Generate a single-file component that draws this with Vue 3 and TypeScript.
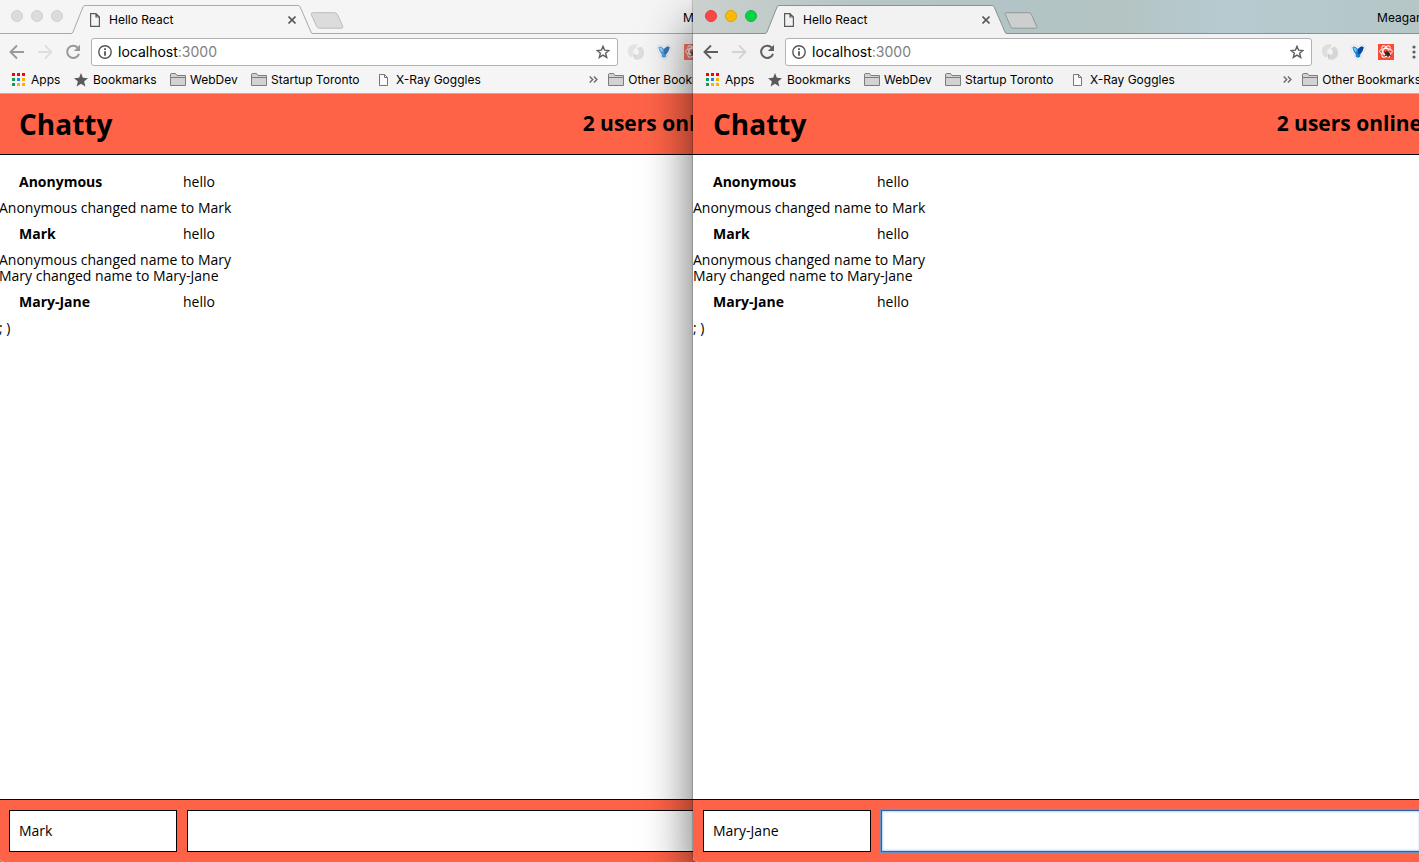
<script setup lang="ts">
import { ref } from 'vue'

interface Message {
  id: number
  user?: string
  text: string
}

interface Bookmark {
  label: string
  icon: 'apps' | 'star' | 'folder' | 'document'
}

interface BrowserWindow {
  id: string
  active: boolean
  user: string
  draft: string
}

const windows = ref<BrowserWindow[]>([
  { id: 'left', active: false, user: 'Mark', draft: '' },
  { id: 'right', active: true, user: 'Mary-Jane', draft: '' },
])

const messages: Message[] = [
  { id: 1, user: 'Anonymous', text: 'hello' },
  { id: 2, text: 'Anonymous changed name to Mark' },
  { id: 3, user: 'Mark', text: 'hello' },
  { id: 4, text: 'Anonymous changed name to Mary' },
  { id: 5, text: 'Mary changed name to Mary-Jane' },
  { id: 6, user: 'Mary-Jane', text: 'hello' },
  { id: 7, text: '; )' },
]

const bookmarks: Bookmark[] = [
  { label: 'Apps', icon: 'apps' },
  { label: 'Bookmarks', icon: 'star' },
  { label: 'WebDev', icon: 'folder' },
  { label: 'Startup Toronto', icon: 'folder' },
  { label: 'X-Ray Goggles', icon: 'document' },
]

const appColors = ['#f00', '#f00', '#f00', '#0f9d58', '#1a84f5', '#fbb003', '#0f9d58', '#fbb003', '#fbb003']
</script>

<template>
  <div class="desktop">
    <section
      v-for="win in windows"
      :key="win.id"
      class="window"
      :class="[win.id, { active: win.active }]"
    >
      <div class="tabstrip">
        <div class="lights">
          <button class="light close" aria-label="Close window"></button>
          <button class="light minimize" aria-label="Minimize window"></button>
          <button class="light maximize" aria-label="Zoom window"></button>
        </div>
        <div class="tab">
          <svg class="tab-shape" viewBox="0 0 242 29" width="242" height="29">
            <path class="tab-fill" d="M0 29 L0 28.5 L2 27 L12 2 Q12.700 .5 14 .5 H227 Q228.500 .5 229.200 2 L240 27 Q240.600 28.500 242 28.500 V29 Z" />
            <path class="tab-line" d="M0 28.500 Q1.400 28.500 2 27 L12 2 Q12.700 .5 14 .5 H227 Q228.500 .5 229.200 2 L240 27 Q240.600 28.500 242 28.500" />
          </svg>
          <svg class="tab-icon" viewBox="0 0 10 14" width="10" height="14">
            <path d="M.6 .6 H6 L9.400 4 V13.400 H.6 Z M6 .6 V4 H9.400" fill="none" stroke="#5a5a5a" stroke-width="1.200" />
          </svg>
          <span class="tab-title">Hello React</span>
          <button class="tab-close" aria-label="Close tab">
            <svg viewBox="0 0 8 8" width="8" height="8"><path d="M.5 .5 L7.500 7.500 M7.500 .5 L.5 7.500" stroke="#5a5a5a" stroke-width="1.6" /></svg>
          </button>
        </div>
        <button class="new-tab" aria-label="New tab">
          <svg viewBox="0 0 34 17" width="34" height="17">
            <path class="new-tab-shape" d="M3 .7 H24.500 Q26.500 .7 27.300 2.300 L32.700 14.200 Q33.400 16.200 31.500 16.200 H9.500 Q7.500 16.200 6.700 14.500 L1.300 2.500 Q.6 .7 3 .7 Z" />
          </svg>
        </button>
        <button class="profile">Meagan</button>
      </div>

      <div class="toolbar">
        <button class="nav-btn" aria-label="Back">
          <svg viewBox="0 0 16 16" width="16" height="16"><path d="M15 8 H2.500 M8 1.500 L1.500 8 L8 14.500" fill="none" stroke="currentColor" stroke-width="1.900" /></svg>
        </button>
        <button class="nav-btn forward" aria-label="Forward">
          <svg viewBox="0 0 16 16" width="16" height="16"><path d="M1 8 H13.500 M8 1.500 L14.500 8 L8 14.500" fill="none" stroke="currentColor" stroke-width="1.900" /></svg>
        </button>
        <button class="nav-btn" aria-label="Reload">
          <svg viewBox="0 0 16 16" width="16" height="16">
            <path d="M12.700 3.600 A6.100 6.100 0 1 0 14 9.800" fill="none" stroke="currentColor" stroke-width="2" />
            <path d="M15 .8 V7 H8.800 Z" fill="currentColor" />
          </svg>
        </button>
        <div class="omnibox">
          <svg viewBox="0 0 14 14" width="14" height="14">
            <circle cx="7" cy="7" r="6.200" fill="none" stroke="#555" stroke-width="1.400" />
            <path d="M6.100 3.300 H7.900 V5 H6.100 Z M6.100 6.200 H7.900 V10.700 H6.100 Z" fill="#555" />
          </svg>
          <span class="url">localhost<span class="port">:3000</span></span>
          <button class="bookmark-star" aria-label="Bookmark this page">
            <svg viewBox="0 0 14 14" width="14" height="14"><path d="M7 1.300 L8.600 5.200 L12.900 5.500 L9.600 8.200 L10.700 12.400 L7 10.100 L3.300 12.400 L4.400 8.200 L1.100 5.500 L5.400 5.200 Z" fill="none" stroke="#5f5f5f" stroke-width="1.400" /></svg>
          </button>
        </div>
        <div class="extensions">
          <button aria-label="Redirect extension">
            <svg viewBox="0 0 16 16" width="16" height="16">
              <path d="M10 1 A7 7 0 0 0 3.500 13.500 L7.500 11.300 A3.600 3.600 0 0 1 7.500 4.500 Z" fill="#dedede" />
              <path d="M6 15 A7 7 0 0 0 12.500 2.500 L8.500 4.700 A3.600 3.600 0 0 1 8.500 11.500 Z" fill="#d6d6d6" />
              <path d="M6 15 L8.500 11.500 L6.500 9.500 Z" fill="#c2c2c2" />
            </svg>
          </button>
          <button aria-label="Vysor extension">
            <svg viewBox="0 0 16 16" width="16" height="16">
              <path d="M.8 4 Q1.500 1 4.500 1 Q6.500 1.200 8 3 Q9.500 1.200 11.500 1 Q14.500 1 15.200 4 Q14.500 8 11.500 11 V13.500 Q8 17.500 4.500 13.500 V11 Q1.500 8 .8 4 Z" fill="#fff" stroke="#d8d8d8" stroke-width=".8" />
              <path d="M2.300 3.600 Q3.800 2 5.800 3 L8 5 L10.200 3 Q12.200 2 13.700 3.600 Q13 7.500 10.300 10.500 V12.700 Q8 14.700 5.700 12.700 V10.500 Q3 7.500 2.300 3.600 Z" fill="#1583d6" />
              <path d="M10.200 3 Q12.200 2 13.700 3.600 Q13 7.500 10.300 10 L8 10.500 V5 Z" fill="#07489b" />
              <path d="M3.200 4 Q4.500 3 5.800 4 L7 6.500 L5.500 8 Z" fill="#7cc5f3" />
            </svg>
          </button>
          <button aria-label="React extension">
            <svg viewBox="0 0 16 16" width="16" height="16">
              <rect width="16" height="16" fill="#fa4b35" />
              <g fill="none" stroke="#fff" stroke-width="1">
                <ellipse cx="8" cy="7.500" rx="6.400" ry="3" />
                <ellipse cx="8" cy="7.500" rx="6.400" ry="3" transform="rotate(60 8 7.500)" />
                <ellipse cx="8" cy="7.500" rx="6.400" ry="3" transform="rotate(120 8 7.500)" />
              </g>
              <ellipse cx="9.500" cy="9.800" rx="2.800" ry="2.200" fill="#43221d" transform="rotate(35 9.500 9.800)" />
              <path d="M6 7.500 L8.500 9.500 M11.500 6.500 L10.500 9 M6.500 12 L9 10.500 M10 13.500 L10 11 M13 12.500 L11 10" stroke="#43221d" />
            </svg>
          </button>
        </div>
        <button class="menu" aria-label="Menu">
          <svg viewBox="0 0 4 14" width="4" height="14"><g fill="#5f5f5f"><circle cx="2" cy="2" r="1.600" /><circle cx="2" cy="7" r="1.600" /><circle cx="2" cy="12" r="1.600" /></g></svg>
        </button>
      </div>

      <nav class="bookmarks">
        <a v-for="item in bookmarks" :key="item.label" href="#" class="bookmark" :class="item.icon">
          <svg v-if="item.icon === 'apps'" viewBox="0 0 13 13" width="13" height="13">
            <rect
              v-for="(color, i) in appColors"
              :key="i"
              :x="(i % 3) * 5"
              :y="Math.floor(i / 3) * 5"
              width="3"
              height="3"
              :fill="color"
            />
          </svg>
          <svg v-else-if="item.icon === 'star'" viewBox="0 0 14 14" width="14" height="14"><path d="M7 0 L8.900 4.800 L14 5.200 L10.100 8.500 L11.400 13.600 L7 10.800 L2.600 13.600 L3.900 8.500 L0 5.200 L5.100 4.800 Z" fill="#5a5a5a" /></svg>
          <svg v-else-if="item.icon === 'folder'" viewBox="0 0 16 13" width="16" height="13"><path d="M.5 12.500 V2 Q.5 .5 1.500 .5 H5.500 L7 2.500 H15.500 V12.500 Z" fill="#d2d2d2" stroke="#7d7d7d" /><path d="M1 4.500 H15" stroke="#7d7d7d" /></svg>
          <svg v-else viewBox="0 0 9 12" width="9" height="12"><path d="M.5 .5 H5.500 L8.500 3.500 V11.500 H.5 Z M5.500 .5 V3.500 H8.500" fill="#fafafa" stroke="#777" /></svg>
          <span>{{ item.label }}</span>
        </a>
        <button class="overflow" aria-label="More bookmarks">
          <svg viewBox="0 0 9 7" width="9" height="7"><path d="M.7 .5 L3.700 3.500 L.7 6.500 M4.900 .5 L7.900 3.500 L4.900 6.500" fill="none" stroke="#6a6a6a" stroke-width="1.400" /></svg>
        </button>
        <a href="#" class="bookmark">
          <svg viewBox="0 0 16 13" width="16" height="13"><path d="M.5 12.500 V2 Q.5 .5 1.500 .5 H5.500 L7 2.500 H15.500 V12.500 Z" fill="#d2d2d2" stroke="#7d7d7d" /><path d="M1 4.500 H15" stroke="#7d7d7d" /></svg>
          <span>Other Bookmarks</span>
        </a>
      </nav>

      <div class="page">
        <header class="chat-header">
          <h1>Chatty</h1>
          <h2>2 users online</h2>
        </header>
        <main class="messages">
          <template v-for="msg in messages" :key="msg.id">
            <div v-if="msg.user" class="message">
              <span class="message-user">{{ msg.user }}</span>
              <span>{{ msg.text }}</span>
            </div>
            <div v-else class="notice">{{ msg.text }}</div>
          </template>
        </main>
        <footer class="chatbar">
          <input v-model="win.user" class="chatbar-user" type="text" aria-label="Your name" />
          <input
            v-model="win.draft"
            class="chatbar-message"
            :class="{ focused: win.active }"
            type="text"
            aria-label="Message"
          />
        </footer>
      </div>
    </section>
  </div>
</template>

<style>
body {
  margin: 0;
}
</style>

<style scoped>
.desktop {
  position: relative;
  height: 100vh;
  overflow: hidden;
  background: #6f7f82;
}

.window {
  position: absolute;
  top: 0;
  bottom: 0;
  width: round(52%, 1px);
  display: flex;
  flex-direction: column;
  border-radius: 0 0 5px 5px;
  overflow: hidden;
  background: #f5f5f5;
  color: #000;
  font-family: Inter, "Liberation Sans", sans-serif;
  font-size: 12px;
}

.window.left {
  left: -1px;
}

.window.right {
  left: 693px;
  background: #f2f2f2;
  box-shadow: 0 0 1px 1px rgba(0, 0, 0, 0.2), 0 24px 50px rgba(0, 0, 0, 0.6);
}

button {
  display: flex;
  align-items: center;
  justify-content: center;
  margin: 0;
  padding: 0;
  border: 0;
  background: none;
  color: inherit;
  font: inherit;
}

svg {
  display: block;
  flex: none;
}

.tabstrip {
  display: flex;
  flex: none;
  box-sizing: border-box;
  height: 34px;
  border-bottom: 1px solid #a9a9a9;
}

.active .tabstrip {
  border-color: #8b9192;
  background: linear-gradient(90deg, #cbd1ce 0, #b7c5c6 22%, #b3c4c6 45%, #b4c4c3 58%, #b6cbd0 72%, #b5c6c5 100%);
}

.lights {
  display: flex;
  gap: 8px;
  width: 60px;
  padding: 10px 0 0 12px;
}

.light {
  box-sizing: border-box;
  width: 12px;
  height: 12px;
  border: 1px solid #d0d0d0;
  border-radius: 50%;
  background: #dcdcdc;
}

.active .close {
  border-color: #e33e3a;
  background: #fc4548;
}

.active .minimize {
  border-color: #e0a000;
  background: #fdbb05;
}

.active .maximize {
  border-color: #12b23a;
  background: #08d346;
}

.tab {
  position: relative;
  display: flex;
  flex: none;
  align-items: center;
  box-sizing: border-box;
  width: 242px;
  height: 29px;
  margin-top: 5px;
  padding: 0 17px 0 19px;
}

.tab-shape {
  position: absolute;
  inset: 0;
}

.tab-fill {
  fill: #f5f5f5;
}

.tab-line {
  fill: none;
  stroke: #a9a9a9;
}

.active .tab-fill {
  fill: #f2f2f2;
}

.active .tab-line {
  stroke: #8b9192;
}

.tab-icon,
.tab-title,
.tab-close {
  position: relative;
}

.tab-title {
  flex: 1;
  margin-left: 9px;
}

.tab-close {
  width: 8px;
  height: 8px;
}

.new-tab {
  width: 34px;
  height: 17px;
  margin: 12px 0 0 -3px;
}

.new-tab-shape {
  fill: #dcdcdc;
  stroke: #bcbcbc;
}

.active .new-tab-shape {
  fill: #cdcfcf;
  stroke: #909797;
}

.profile {
  height: 34px;
  margin-left: auto;
  margin-right: 8px;
}

.toolbar {
  display: flex;
  flex: none;
  align-items: center;
  height: 36px;
  padding: 0 15px 0 10px;
}

.nav-btn {
  width: 16px;
  height: 16px;
  margin-right: 12px;
  color: #5f5f5f;
}

.left .nav-btn {
  color: #999;
}

.nav-btn.forward {
  color: #d4d4d4;
}

.left .nav-btn.forward {
  color: #dfdfdf;
}

.omnibox {
  display: flex;
  flex: 1;
  align-items: center;
  box-sizing: border-box;
  height: 28px;
  margin-left: -2px;
  padding: 0 7px 0 6px;
  border: 1px solid #b2b2b2;
  border-radius: 3px;
  background: #fff;
  font-size: 14px;
}

.url {
  flex: 1;
  margin-left: 6px;
  padding-bottom: 1px;
}

.port {
  color: #808080;
}

.extensions {
  display: flex;
  gap: 12px;
  margin: 0 18px 0 10px;
}

.left .extensions {
  opacity: 0.75;
}

.bookmarks {
  display: grid;
  grid-template-columns: 62px 96px 81px 128px 1fr 19px auto;
  flex: none;
  align-items: center;
  box-sizing: border-box;
  height: 24px;
  padding: 0 10px 4px 13px;
  border-bottom: 1px solid #b4b4b4;
}

.bookmark {
  display: flex;
  align-items: center;
  gap: 4px;
  color: #000;
  white-space: nowrap;
  text-decoration: none;
}

.bookmark.star {
  gap: 5px;
}

.bookmark.apps {
  gap: 6px;
}

.bookmark.document {
  gap: 8px;
}

.overflow {
  justify-content: flex-start;
}

.page {
  display: flex;
  flex: 1;
  flex-direction: column;
  min-height: 0;
  background: #fff;
  font-family: "Open Sans", "Noto Sans", sans-serif;
  font-size: 14px;
  line-height: 16px;
}

.chat-header {
  display: flex;
  flex: none;
  align-items: center;
  justify-content: space-between;
  box-sizing: border-box;
  height: 61px;
  padding: 0 9px 0 20px;
  border-bottom: 1px solid #000;
  background: #ff6347;
}

h1,
h2 {
  margin: 0;
  font-weight: 700;
  line-height: 32px;
  white-space: nowrap;
}

h1 {
  font-size: 28px;
}

h2 {
  padding-bottom: 2px;
  font-size: 21px;
}

.messages {
  flex: 1;
  padding-top: 9px;
}

.message {
  display: flex;
  padding: 10px 20px;
}

.message-user {
  width: 164px;
  font-weight: 700;
}

.chatbar {
  display: flex;
  flex: none;
  gap: 10px;
  padding: 10px;
  border-top: 1px solid #000;
  background: #ff6347;
}

.chatbar input {
  box-sizing: border-box;
  height: 42px;
  padding: 0 9px 2px;
  border: 1px solid #000;
  border-radius: 0;
  outline: none;
  background: #fff;
  color: #000;
  font: inherit;
}

.chatbar-user {
  width: 168px;
}

.chatbar-message {
  flex: 1;
  min-width: 0;
}

.chatbar .focused {
  border-color: #2c62a8;
  box-shadow: 0 0 1px 1px #6f8fc4, inset 0 0 2px 1px #b5d6f5;
}
</style>
